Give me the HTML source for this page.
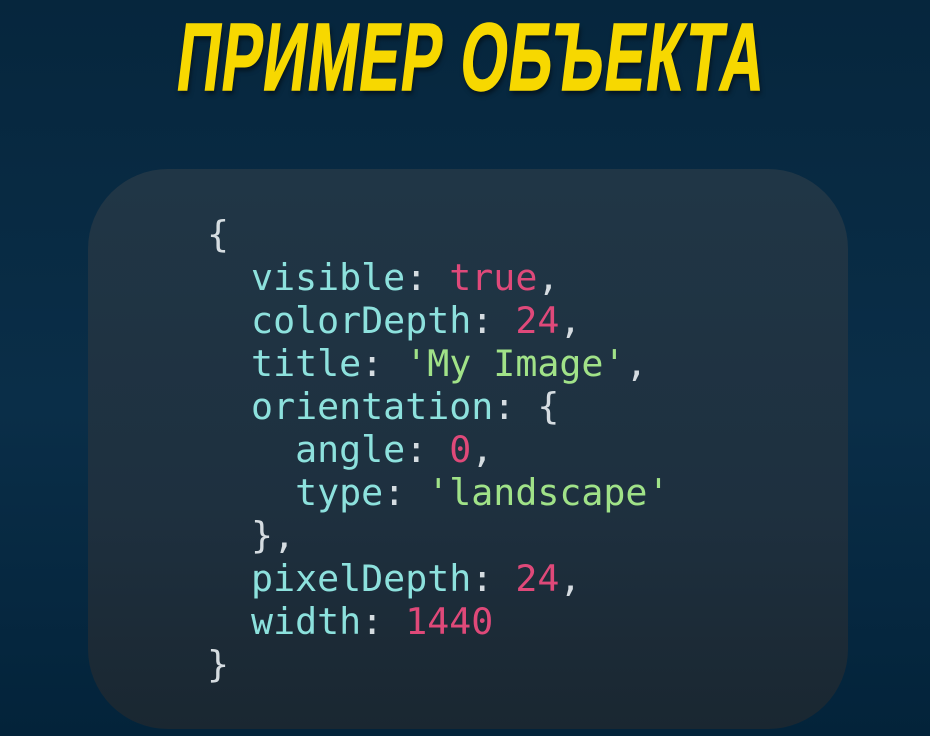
<!DOCTYPE html>
<html><head><meta charset="utf-8"><style>
html,body{margin:0;padding:0;overflow:hidden;width:930px;height:736px}
body{background:linear-gradient(#06263d,#0a2e48 55%,#03233a);position:relative}
#wrap{position:absolute;left:0;top:0;width:930px;height:736px;overflow:hidden}
h1{position:absolute;left:172px;top:8px;margin:0;height:100px;font-family:"Liberation Sans Narrow","Liberation Sans",sans-serif;font-weight:bold;font-size:96px;line-height:100px;color:#f7d800;white-space:nowrap;transform-origin:0 100%;text-shadow:3px 4px 6px rgba(0,0,0,.5);letter-spacing:2px;-webkit-text-stroke:1.5px #f7d800}
.panel{position:absolute;left:88px;top:169px;width:760px;height:560px;border-radius:80px;background:linear-gradient(#203646,#1e303f 60%,#1a2731)}
pre{position:absolute;left:207px;top:213px;margin:0;font-family:"DejaVu Sans Mono","Liberation Mono",monospace;font-size:36.6px;line-height:43px;color:#dfe6ea;opacity:.95}
.k{color:#93ebe6}.n{color:#ea4b7d}.s{color:#a8ec8c}
</style></head><body>
<div id="wrap">
<h1 id="t">ПРИМЕР ОБЪЕКТА</h1>
<div class="panel"></div>
<pre>{
  <span class="k">visible</span>: <span class="n">true</span>,
  <span class="k">colorDepth</span>: <span class="n">24</span>,
  <span class="k">title</span>: <span class="s">'My Image'</span>,
  <span class="k">orientation</span>: {
    <span class="k">angle</span>: <span class="n">0</span>,
    <span class="k">type</span>: <span class="s">'landscape'</span>
  },
  <span class="k">pixelDepth</span>: <span class="n">24</span>,
  <span class="k">width</span>: <span class="n">1440</span>
}</pre>
</div>
<script>
var t=document.getElementById('t');var r=document.createRange();r.selectNodeContents(t);var w=r.getBoundingClientRect().width;t.style.transform='skewX(-7deg) scaleX('+(588/w)+')';
</script>
</body></html>
